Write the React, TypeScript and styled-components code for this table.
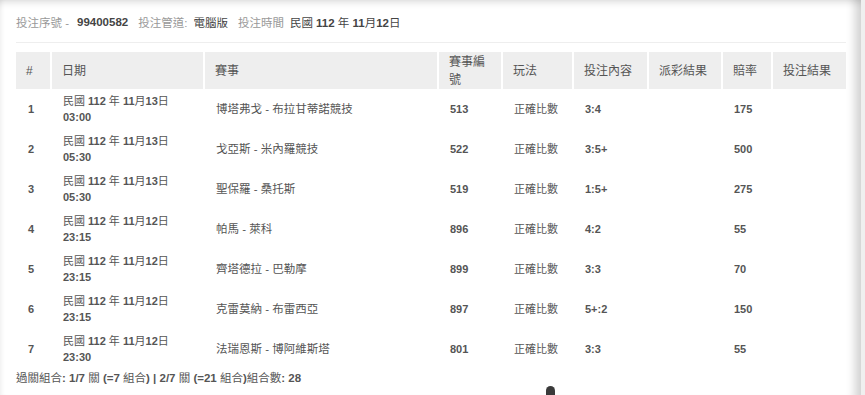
import React from 'react'
import styled, { createGlobalStyle } from 'styled-components'

const GlobalStyle = createGlobalStyle`
  html, body {
    margin: 0;
    padding: 0;
    background: #efefef;
  }
  body {
    font-family: "Liberation Sans", Arial, "Noto Sans CJK TC", sans-serif;
    color: #555;
  }
`

interface Bet {
  no: number;
  date: string;
  time: string;
  match: string;
  matchId: string;
  play: string;
  pick: string;
  odds: string;
}

const bets: Bet[] = [
  { no: 1, date: '民國 112 年 11月13日', time: '03:00', match: '博塔弗戈 - 布拉甘蒂諾競技', matchId: '513', play: '正確比數', pick: '3:4', odds: '175' },
  { no: 2, date: '民國 112 年 11月13日', time: '05:30', match: '戈亞斯 - 米內羅競技', matchId: '522', play: '正確比數', pick: '3:5+', odds: '500' },
  { no: 3, date: '民國 112 年 11月13日', time: '05:30', match: '聖保羅 - 桑托斯', matchId: '519', play: '正確比數', pick: '1:5+', odds: '275' },
  { no: 4, date: '民國 112 年 11月12日', time: '23:15', match: '帕馬 - 萊科', matchId: '896', play: '正確比數', pick: '4:2', odds: '55' },
  { no: 5, date: '民國 112 年 11月12日', time: '23:15', match: '齊塔德拉 - 巴勒摩', matchId: '899', play: '正確比數', pick: '3:3', odds: '70' },
  { no: 6, date: '民國 112 年 11月12日', time: '23:15', match: '克雷莫納 - 布雷西亞', matchId: '897', play: '正確比數', pick: '5+:2', odds: '150' },
  { no: 7, date: '民國 112 年 11月12日', time: '23:30', match: '法瑞恩斯 - 博阿維斯塔', matchId: '801', play: '正確比數', pick: '3:3', odds: '55' },
]

const columns = [
  { title: '#', width: 35 },
  { title: '日期', width: 153 },
  { title: '賽事', width: 234 },
  { title: '賽事編號', width: 64 },
  { title: '玩法', width: 71 },
  { title: '投注內容', width: 75 },
  { title: '派彩結果', width: 74 },
  { title: '賠率', width: 50 },
  { title: '投注結果', width: 74 },
]

// digits bold, CJK characters stay regular like the original render
function Mixed({ text }: { text: string }) {
  const parts = text.split(/([\u3400-\u9fff]+)/).filter(Boolean)
  return (
    <>
      {parts.map((p, i) =>
        /[\u3400-\u9fff]/.test(p) ? <Cjk key={i}>{p}</Cjk> : <span key={i}>{p}</span>
      )}
    </>
  )
}

function App() {
  return (
    <Page>
      <GlobalStyle />
      <InfoBar>
        <Label $first>投注序號 -</Label>
        <Value>99400582</Value>
        <Label>投注管道:</Label>
        <Value><Mixed text="電腦版" /></Value>
        <Label>投注時間</Label>
        <Value><Mixed text="民國 112 年 11月12日" /></Value>
      </InfoBar>
      <Divider />
      <Table>
        <colgroup>
          {columns.map((c) => (
            <col key={c.title} style={{ width: c.width }} />
          ))}
        </colgroup>
        <thead>
          <tr>
            {columns.map((c) => (
              <Th key={c.title}>{c.title}</Th>
            ))}
          </tr>
        </thead>
        <tbody>
          {bets.map((b) => (
            <tr key={b.no}>
              <Td $bold>{b.no}</Td>
              <Td $bold>
                <Mixed text={b.date} />
                <br />
                {b.time}
              </Td>
              <Td>{b.match}</Td>
              <Td $bold>{b.matchId}</Td>
              <Td $small>{b.play}</Td>
              <Td $bold>{b.pick}</Td>
              <Td></Td>
              <Td $bold>{b.odds}</Td>
              <Td></Td>
            </tr>
          ))}
        </tbody>
      </Table>
      <Summary>
        <Mixed text="過關組合: 1/7 關 (=7 組合) | 2/7 關 (=21 組合)組合數: 28" />
      </Summary>
      <Handle />
    </Page>
  )
}

const Page = styled.div`
  position: relative;
  box-sizing: border-box;
  width: 861px;
  height: 395px;
  background: #fff;
  padding: 12px 15px 0 16px;
  overflow: hidden;
  box-shadow:
    inset 0 9px 8px -8px rgba(0, 0, 0, 0.18),
    inset 5px 0 5px -4px rgba(0, 0, 0, 0.08),
    inset -14px 0 10px -8px rgba(0, 0, 0, 0.18);
`

const InfoBar = styled.div`
  display: flex;
  align-items: center;
  gap: 6px;
  height: 20px;
  font-size: 11.5px;
`

const Label = styled.span<{ $first?: boolean }>`
  color: #999;
  margin-right: ${(p) => (p.$first ? '2px' : '0')};
`

const Value = styled.span`
  color: #444;
  font-weight: bold;
  margin-right: 4px;
`

const Cjk = styled.span`
  font-weight: normal;
`

const Divider = styled.div`
  height: 1px;
  background: #eee;
  margin: 10px 0 9px;
`

const Table = styled.table`
  width: 830px;
  table-layout: fixed;
  border-collapse: collapse;
  font-size: 11px;
`

const Th = styled.th`
  background: #eee;
  color: #555;
  font-weight: normal;
  font-size: 12px;
  text-align: left;
  height: 37px;
  line-height: 18px;
  padding: 0 10px;
  border-left: 2px solid #fff;
  &:first-child {
    border-left: none;
  }
`

const Td = styled.td<{ $bold?: boolean; $small?: boolean }>`
  height: 40px;
  box-sizing: border-box;
  padding: 4px 4px 4px 12px;
  line-height: 16px;
  color: #555;
  font-size: ${(p) => (p.$bold || p.$small ? '11px' : '11.5px')};
  font-weight: ${(p) => (p.$bold ? 'bold' : 'normal')};
  white-space: nowrap;
  vertical-align: middle;
`

const Summary = styled.div`
  font-size: 11.5px;
  font-weight: bold;
  color: #555;
  line-height: 16px;
  margin-top: 1px;
`

const Handle = styled.div`
  position: absolute;
  left: 546px;
  top: 386px;
  width: 9px;
  height: 14px;
  border-radius: 5px 5px 0 0;
  background: #3a3a3a;
`

export default App
